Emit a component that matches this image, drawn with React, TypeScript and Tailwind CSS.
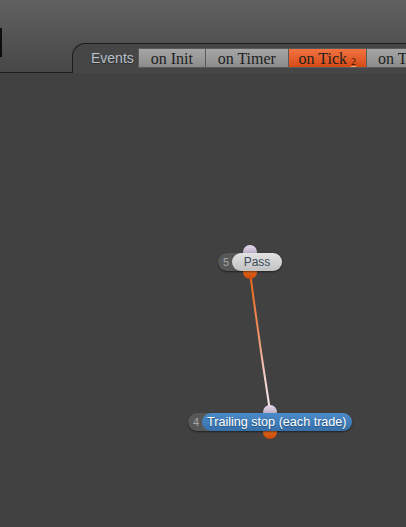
import React from "react"

type NodeProps = {
    x: number
    y: number
    index: number
    label: string
    active?: boolean
}

function FlowNode({ x, y, index, label, active }: NodeProps) {
    return (
        <div className="absolute" style={{ left: x, top: y }}>
            <div className="relative">
                {/* connectors sit behind the pill */}
                <div className="absolute left-1/2 -translate-x-1/2 -top-[8px] w-[14px] h-[14px] rounded-full bg-gradient-to-b from-[#e6d8ec] to-[#a394ad]" />
                <div className="absolute left-1/2 -translate-x-1/2 top-[12px] w-[14px] h-[14px] rounded-full bg-gradient-to-b from-[#f27a2a] to-[#c94806]" />
                <div className="relative flex items-center h-[18px] rounded-full bg-[#575757] pl-[5px] shadow-[0_1px_2px_rgba(0,0,0,0.5)]">
                    <span className="w-[9px] text-[11px] leading-none text-[#a8a8a8]">{index}</span>
                    <div
                        className={
                            active
                                ? "flex items-center justify-center min-w-[50px] h-[18px] rounded-full px-[5px] bg-gradient-to-b from-[#4b8bc9] to-[#3670aa] text-white text-[12.6px] [text-shadow:0_1px_1px_rgba(0,0,0,0.35)]"
                                : "flex items-center justify-center min-w-[50px] h-[18px] rounded-full px-[5px] bg-gradient-to-b from-[#e2e2e2] to-[#c2c2c2] text-[#3c4b5a] text-[12px]"
                        }
                    >
                        {label}
                    </div>
                </div>
            </div>
        </div>
    )
}

export default function App() {
    const tabs = [
        { name: "on Init", w: "w-[68px]" },
        { name: "on Timer", w: "w-[83px]" },
        { name: "on Tick", w: "w-[78px]", active: true, count: 2 },
        { name: "on Trade", w: "w-[80px]" },
    ]

    return (
        <div className="w-[406px] h-[527px] overflow-hidden flex flex-col bg-[#414141] font-['Liberation_Sans',Arial,sans-serif]">
            {/* Header */}
            <div className="h-[73px] flex shrink-0 bg-gradient-to-b from-[#616161] to-[#474747]">
                <div className="w-[72px] shrink-0 border-b border-[#1c1c1c]">
                    <div className="mt-[28px] h-[29px] w-[2px] bg-[#0e0e0e]" />
                </div>
                <div className="flex-1 mt-[43px] rounded-tl-[13px] border-t border-l border-[#1c1c1c] bg-[#464646] flex items-start pt-[4px] pl-[18px] min-w-0">
                    <span className="text-[14px] leading-[20px] text-[#b7c1cb] mr-[4px] [text-shadow:0_1px_1px_rgba(0,0,0,0.4)]">
                        Events
                    </span>
                    <div className="flex shrink-0">
                        {tabs.map((t, i) => (
                            <div
                                key={t.name}
                                className={
                                    (t.active
                                        ? "bg-gradient-to-b from-[#f27340] to-[#d64a14] "
                                        : "bg-gradient-to-b from-[#a6a6a6] to-[#8c8c8c] ") +
                                    (i === 0 ? "border-l " : "") +
                                    t.w +
                                    " shrink-0 h-[20px] border-y border-r border-[#5a5a5a] flex items-center justify-center whitespace-nowrap text-[16px] leading-[18px] pt-[1px] text-[#1e1e1e] font-['Liberation_Serif',serif]"
                                }
                            >
                                {t.name}
                                {t.count && (
                                    <span className="ml-[4px] mt-[7px] text-[10px] leading-none text-[#3a1808] underline decoration-[#f4a27a]">
                                        {t.count}
                                    </span>
                                )}
                            </div>
                        ))}
                    </div>
                </div>
            </div>

            {/* Canvas */}
            <div className="relative flex-1">
                <svg className="absolute inset-0" width="406" height="454">
                    <defs>
                        <linearGradient id="wire" x1="250" y1="199" x2="270" y2="338" gradientUnits="userSpaceOnUse">
                            <stop offset="0" stopColor="#e8640f" />
                            <stop offset="0.4" stopColor="#ee8a5a" />
                            <stop offset="0.75" stopColor="#f3cfc8" />
                            <stop offset="1" stopColor="#f6eef6" />
                        </linearGradient>
                    </defs>
                    <path d="M250 199 Q 259 268 270 338" fill="none" stroke="url(#wire)" strokeWidth="2" />
                </svg>
                <FlowNode x={218} y={180} index={5} label="Pass" />
                <FlowNode x={188} y={340} index={4} label="Trailing stop (each trade)" active />
            </div>
        </div>
    )
}
